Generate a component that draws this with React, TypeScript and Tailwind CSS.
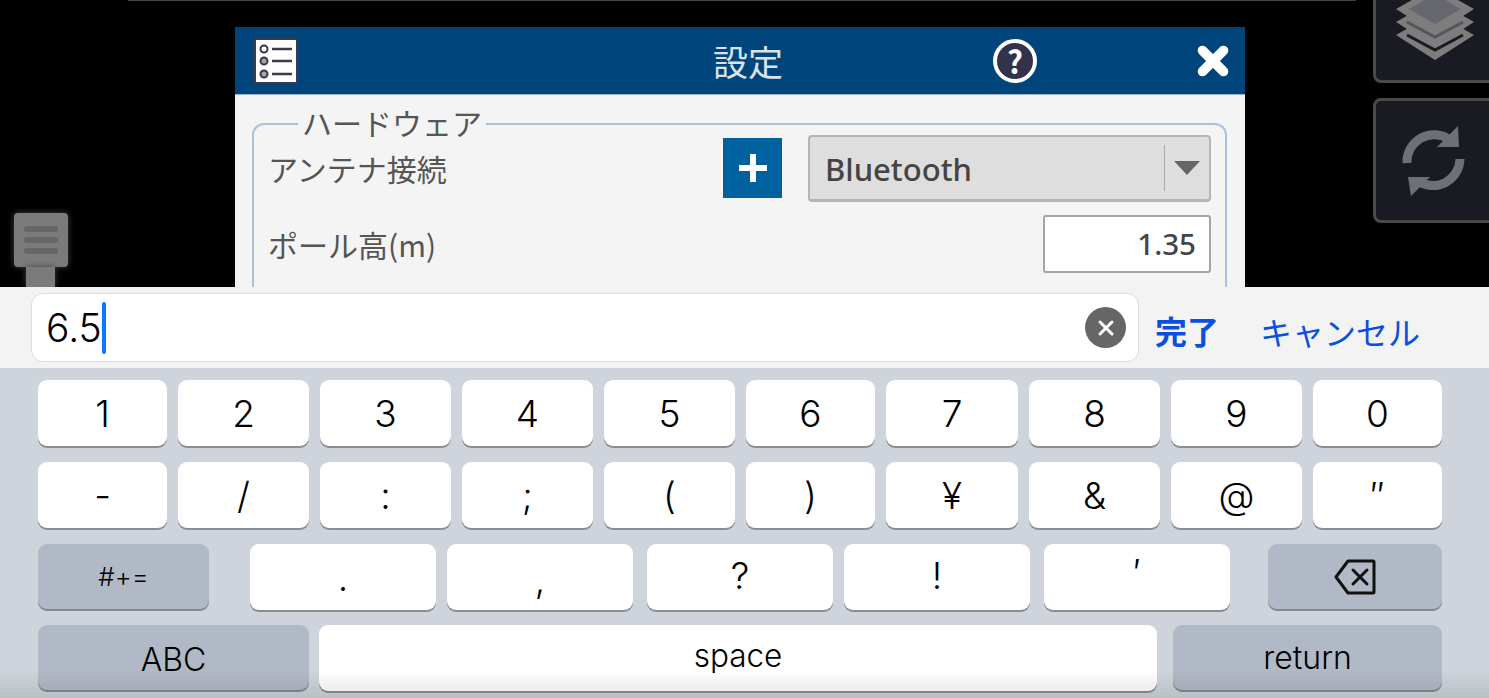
import { X } from "lucide-react";

const JP = "font-['Noto_Sans_CJK_JP','Noto_Sans',sans-serif]";
const UI = "font-['Inter','Liberation_Sans',sans-serif]";

const row1 = ["1", "2", "3", "4", "5", "6", "7", "8", "9", "0"];
const row2 = ["-", "/", ":", ";", "(", ")", "¥", "&", "@", "″"];
const row3 = [
  { label: ".", className: "" },
  { label: ",", className: "ml-[11px] pt-[5px]" },
  { label: "?", className: "ml-[14px] pb-[4px]" },
  { label: "!", className: "ml-[11px] pb-[4px]" },
  { label: "′", className: "ml-[14px] pb-[9px]" },
];

function Key({ label, className = "" }: { label: string; className?: string }) {
  return (
    <div
      className={`flex h-[66px] items-center justify-center rounded-[9px] bg-white text-[37px] font-[350] leading-none text-black shadow-[0_2px_0_#8a8e94] ${className}`}
    >
      {label}
    </div>
  );
}

function FuncKey({ children, className = "" }: { children: React.ReactNode; className?: string }) {
  return (
    <div
      className={`flex h-[65px] items-center justify-center rounded-[9px] bg-[#b2b9c6] font-[350] text-black shadow-[0_2px_0_#85898f] ${className}`}
    >
      {children}
    </div>
  );
}

export default function App() {
  return (
    <div className={`relative flex h-[698px] w-[1489px] flex-col overflow-hidden bg-black ${UI}`}>
      <div className="absolute left-[128px] top-0 h-px w-[1228px] bg-[#444]" />

      {/* App behind the keyboard */}
      <div className="flex h-[287px] shrink-0 overflow-hidden">
        {/* pole marker */}
        <div className="flex w-[235px] shrink-0 flex-col pl-[14px] pt-[213px]">
          <div className="flex h-[54px] w-[54px] flex-col items-center justify-center gap-[5px] rounded-[4px] bg-[#7b7b7b] shadow-[0_0_6px_#444]">
            <div className="h-[6px] w-[34px] rounded-full bg-[#666]" />
            <div className="h-[6px] w-[34px] rounded-full bg-[#666]" />
            <div className="h-[6px] w-[34px] rounded-full bg-[#666]" />
          </div>
          <div className="ml-[12px] h-[20px] w-[29px] bg-[#7b7b7b] shadow-[0_0_6px_#444]" />
        </div>

        {/* settings dialog */}
        <div className={`mt-[27px] w-[1010px] shrink-0 bg-[#f4f4f4] ${JP}`}>
          <div className="flex h-[68px] items-center border-b border-[#9db7d0] bg-[#00447c] pl-[19px] pr-[8px]">
            <svg width="44" height="46" viewBox="0 0 44 46" className="shrink-0">
              <rect x="1" y="1" width="42" height="44" fill="#fff" stroke="#3a3a4c" strokeWidth="2" />
              <circle cx="10" cy="11" r="3.5" fill="#fff" stroke="#3a3a4c" strokeWidth="2" />
              <circle cx="10" cy="23" r="3.5" fill="#a5a5b0" stroke="#3a3a4c" strokeWidth="2" />
              <circle cx="10" cy="36" r="3.5" fill="#a5a5b0" stroke="#3a3a4c" strokeWidth="2" />
              <path d="M18 11h20M18 23h20M18 36h20" stroke="#3a3a4c" strokeWidth="2.5" />
            </svg>
            <div className="ml-[415px] shrink-0 whitespace-nowrap text-[35px] leading-none text-[#d9e2ea]">設定</div>
            <div className="ml-[210px] flex h-[44px] w-[44px] shrink-0 items-center justify-center rounded-full border-[4px] border-white bg-[#33324a] text-[31px] font-bold leading-none text-white">
              ?
            </div>
            <X className="ml-[155px] shrink-0 text-white" size={42} strokeWidth={5.5} />
          </div>
          <div className="pl-[17px] pr-[18px] pt-[21px]">
            <fieldset className="h-[240px] rounded-t-[12px] border-2 border-[#a9c1d9] pl-[14px] pr-[14px]">
              <legend className="ml-[30px] -translate-y-[1px] px-[4px] text-[30px] leading-[0.5] text-[#555]">ハードウェア</legend>
              <div className="mt-[3px] flex h-[68px] items-center">
                <div className="w-[455px] text-[30px] text-[#555]">アンテナ接続</div>
                <div className="flex h-[60px] w-[59px] items-center justify-center bg-[#00619f]">
                  <svg width="32" height="32" viewBox="0 0 32 32">
                    <path d="M16 2v28M2 16h28" stroke="#fff" strokeWidth="6" />
                  </svg>
                </div>
                <div className="ml-[26px] flex h-[67px] w-[403px] items-center rounded-[4px] border-2 border-b-[3px] border-[#b5b5b5] bg-[#dedede] pl-[15px]">
                  <span className="flex-1 pt-[3px] font-['Noto_Sans',sans-serif] text-[31px] font-medium leading-none text-[#444]">Bluetooth</span>
                  <div className="h-[46px] w-px bg-[#aaa]" />
                  <svg width="26" height="14" viewBox="0 0 26 14" className="mx-[9px]">
                    <path d="M0 0h26L13 14z" fill="#666" />
                  </svg>
                </div>
              </div>
              <div className="mt-[13px] flex h-[58px] items-center justify-between">
                <div className="text-[30px] text-[#555]">ポール高(m)</div>
                <div className="flex h-[58px] w-[168px] items-center justify-end rounded-[3px] border-2 border-[#a5a5a5] bg-white pr-[13px] font-['Noto_Sans',sans-serif] text-[29.5px] font-medium leading-none text-[#444]">
                  1.35
                </div>
              </div>
            </fieldset>
          </div>
        </div>

        {/* right tool buttons */}
        <div className="ml-[128px] flex flex-1 flex-col gap-[15px]">
          <div className="-mt-[10px] flex h-[93px] w-[130px] items-start rounded-[8px] border-[3px] border-[#4a4a4a] bg-[#1a1b22] pl-[19px]">
            <svg width="80" height="70" viewBox="0 2 80 70" className="shrink-0">
              <path d="M1 44l39-22 39 22-39 25z" fill="#7d7d7d" />
              <path d="M12 44l28 15 28-15" fill="none" stroke="#1a1b22" strokeWidth="3" />
              <path d="M1 31L40 9l39 22-39 25z" fill="#7d7d7d" />
              <path d="M12 31l28 15 28-15" fill="none" stroke="#55555c" strokeWidth="3" />
              <path d="M1 18L40-4l39 22-39 25z" fill="#7d7d7d" />
              <path d="M14 18L40 3l26 15-26 15z" fill="#66666e" />
            </svg>
          </div>
          <div className="flex h-[125px] w-[130px] items-start rounded-[8px] border-[3px] border-[#4a4a4a] bg-[#1a1b22] pl-[24px] pt-[23px]">
            <svg width="68" height="72" viewBox="0 0 68 72" fill="none" className="shrink-0">
              <path d="M7 39A27 27 0 0 1 50 16" stroke="#6f6f78" strokeWidth="9" />
              <path d="M58 2l1 21H37z" fill="#6f6f78" />
              <path d="M60 35A27 27 0 0 1 18 57" stroke="#6f6f78" strokeWidth="9" />
              <path d="M8 53h22L11 72z" fill="#6f6f78" />
            </svg>
          </div>
        </div>
      </div>

      {/* input bar */}
      <div className="flex h-[81px] shrink-0 items-start bg-[#f3f3f4] pl-[31px] pt-[6px]">
        <div className="flex h-[69px] w-[1108px] items-center rounded-[12px] border border-[#dddddd] bg-white pl-[14px] pr-[12px]">
          <span className="text-[39px] font-[350] leading-none text-black">6.5</span>
          <div className="h-[52px] w-[4px] rounded-full bg-[#0a7aff]" />
          <div className="ml-auto flex h-[41px] w-[41px] items-center justify-center rounded-full bg-[#666666]">
            <X className="text-white" size={24} strokeWidth={3} />
          </div>
        </div>
        <div className={`ml-[16px] mt-[21px] w-[105px] text-[32px] font-bold leading-none text-[#0b4fe0] ${JP}`}>完了</div>
        <div className={`mt-[22px] text-[32px] leading-none text-[#0b4fe0] ${JP}`}>キャンセル</div>
      </div>

      {/* keyboard */}
      <div className="flex flex-1 flex-col bg-[#cfd4dc] pl-[38px] pr-[47px] pt-[12px]">
        <div className="grid grid-cols-[129px_131px_131px_131px_131px_129px_132px_131px_131px_129px] gap-x-[11px]">
          {row1.map((k) => (
            <Key key={k} label={k} />
          ))}
        </div>
        <div className="mt-[16px] grid grid-cols-[129px_131px_131px_131px_131px_129px_132px_131px_131px_129px] gap-x-[11px]">
          {row2.map((k) => (
            <Key key={k} label={k} />
          ))}
        </div>
        <div className="mt-[16px] flex">
          <FuncKey className="w-[171px] pb-[1px] text-[26px]">#+=</FuncKey>
          <div className="ml-[41px] flex">
            {row3.map((k) => (
              <Key key={k.label} label={k.label} className={`w-[186px] ${k.className}`} />
            ))}
          </div>
          <FuncKey className="ml-[38px] w-[174px]">
            <svg width="42" height="36" viewBox="0 0 42 36" fill="none" stroke="#111" strokeWidth="3" strokeLinejoin="round" strokeLinecap="round">
              <path d="M14 2h25a1 1 0 0 1 1 1v30a1 1 0 0 1-1 1H14L2 18z" />
              <path d="M19 11l14 14M33 11L19 25" />
            </svg>
          </FuncKey>
        </div>
        <div className="mt-[15px] flex">
          <FuncKey className="w-[271px] pt-[4px] text-[32px]">ABC</FuncKey>
          <Key label="space" className="ml-[10px] w-[838px] pb-[4px] !text-[31.5px]" />
          <FuncKey className="ml-[16px] w-[269px] text-[32px]">return</FuncKey>
        </div>
      </div>

      {/* bottom fade over the keyboard */}
      <div className="pointer-events-none absolute inset-x-0 bottom-0 h-[28px] bg-gradient-to-b from-transparent to-black/10" />
    </div>
  );
}
